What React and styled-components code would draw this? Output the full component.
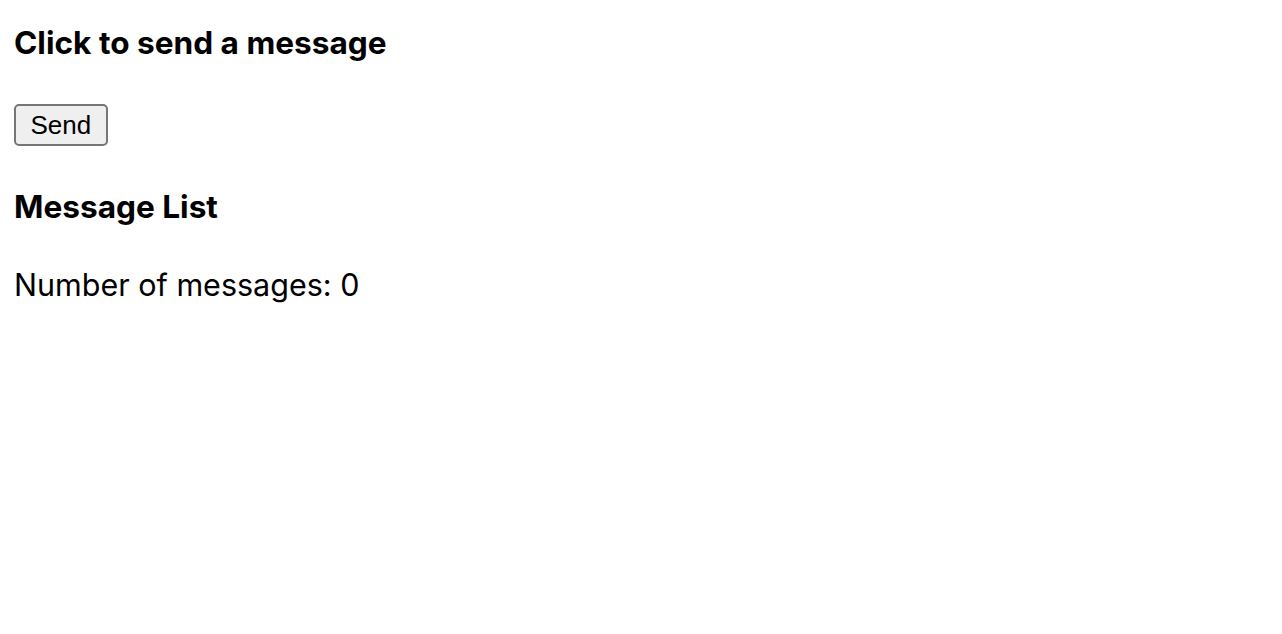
import React, { useState } from 'react';
import styled, { createGlobalStyle } from 'styled-components';

const GlobalStyle = createGlobalStyle`
  body {
    margin: 0;
    background: #fff;
    color: #000;
    font-family: Inter, "Noto Sans", sans-serif;
  }
`;

const Page = styled.div`
  padding: 23px 14px;
  display: flex;
  flex-direction: column;
  align-items: flex-start;
`;

const Heading = styled.h3`
  margin: 0;
  font-size: 31.6px;
  line-height: 40px;
  font-weight: 700;
`;

const SendButton = styled.button`
  margin: 41px 0 0 0;
  height: 42px;
  padding: 0 14.5px;
  font-family: "Liberation Sans", Arial, sans-serif;
  font-size: 26px;
  color: #000;
  background: #efefef;
  border: 2px solid #767676;
  border-radius: 5px;
`;

const ListSection = styled.div`
  margin-top: 41px;
`;

const Count = styled.p`
  margin: 38px 0 0 0;
  font-size: 30.5px;
  line-height: 40px;
`;

const App = () => {
  const [messages, setMessages] = useState([]);

  return (
    <Page>
      <GlobalStyle />
      <Heading>Click to send a message</Heading>
      <SendButton onClick={() => setMessages((m) => [...m, 'Hello'])}>Send</SendButton>
      <ListSection>
        <Heading>Message List</Heading>
        <Count>Number of messages: {messages.length}</Count>
      </ListSection>
    </Page>
  );
};

export default App;
